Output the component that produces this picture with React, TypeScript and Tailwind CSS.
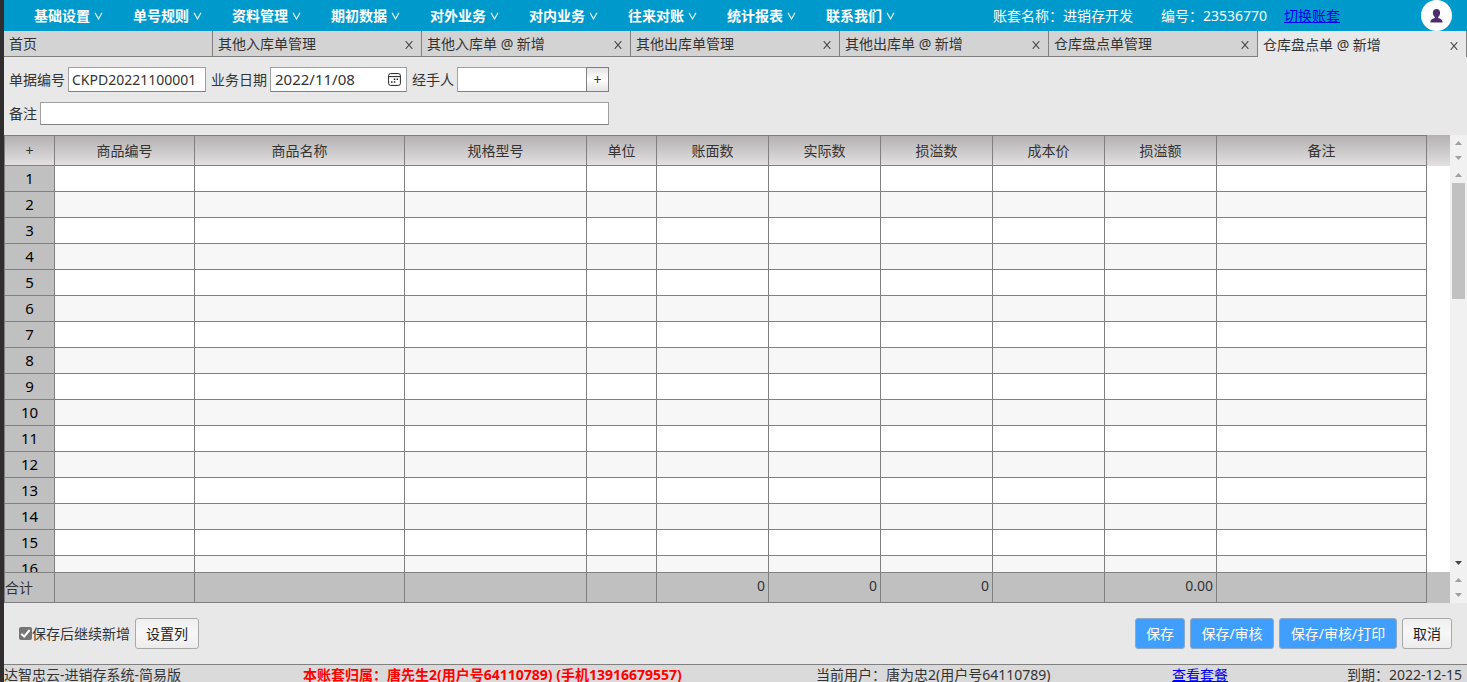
import React from "react";

const menus = ["基础设置", "单号规则", "资料管理", "期初数据", "对外业务", "对内业务", "往来对账", "统计报表", "联系我们"];

const tabs = [
  "首页",
  "其他入库单管理",
  "其他入库单 @ 新增",
  "其他出库单管理",
  "其他出库单 @ 新增",
  "仓库盘点单管理",
  "仓库盘点单 @ 新增",
];

const columns = [
  { title: "商品编号", col: "w-[140px]", total: "" },
  { title: "商品名称", col: "w-[210px]", total: "" },
  { title: "规格型号", col: "w-[182px]", total: "" },
  { title: "单位", col: "w-[70px]", total: "" },
  { title: "账面数", col: "w-[112px]", total: "0" },
  { title: "实际数", col: "w-[112px]", total: "0" },
  { title: "损溢数", col: "w-[112px]", total: "0" },
  { title: "成本价", col: "w-[112px]", total: "" },
  { title: "损溢额", col: "w-[112px]", total: "0.00" },
  { title: "备注", col: "w-[210px]", total: "" },
];

const rows = Array.from({ length: 16 }, (_, i) => i + 1);

const field = "border border-[#a0a0a0] border-b-[#808080] bg-white px-[3px] text-[#333] outline-none";
const plainButton =
  "h-[31px] rounded-[3px] border border-[#a9a9a9] bg-linear-to-b from-[#efefef] via-[#f7f7f7] to-[#ececec] px-[10px] text-[#222]";
const blueButton = "h-[31px] rounded-[3px] border border-[#8fa9c4] bg-[#409eff] px-[10px] text-white";

function Arrow({ down = false, dark = false }: { down?: boolean; dark?: boolean }) {
  return (
    <svg width="7" height="4" viewBox="0 0 7 4" aria-hidden="true">
      <path d={down ? "M0 0H7L3.5 4Z" : "M0 4H7L3.5 0Z"} fill={dark ? "#444" : "#a0a0a0"} />
    </svg>
  );
}

function MiniScroll() {
  return (
    <div className="flex h-[31px] flex-col items-center gap-[11px] pt-[6px]">
      <Arrow />
      <Arrow down />
    </div>
  );
}

function Header() {
  return (
    <header className="flex h-[31px] shrink-0 items-center bg-[#0099cc] pl-[30px] pr-[15px] text-white">
      <nav className="flex">
        {menus.map((m) => (
          <button key={m} type="button" className="flex w-[99px] items-center gap-1 font-bold whitespace-nowrap">
            {m}
            <svg width="9" height="8" viewBox="0 0 9 8" fill="none" stroke="#fff" strokeWidth="1.1" className="mt-px" aria-hidden="true">
              <path d="M1 0.8L4.5 7L8 0.8" />
            </svg>
          </button>
        ))}
      </nav>
      <div className="ml-auto flex items-center whitespace-nowrap">
        <span className="mr-7">账套名称：进销存开发</span>
        <span className="mr-[17px]">编号：23536770</span>
        <a href="#switch" className="mr-[81px] text-[#0000ee] underline">
          切换账套
        </a>
        <button type="button" aria-label="用户" className="flex size-[31px] items-center justify-center rounded-full bg-white">
          <svg width="13" height="14" viewBox="0 0 13 14" fill="#4b2e6b" className="mr-px" aria-hidden="true">
            <path d="M6.5 0C8.8 0 10.1 1.5 10.1 3.9C10.1 5.5 9.3 7.1 8.2 7.9V9C9.8 9.7 12.6 10.2 12.6 13.4H0.4C0.4 10.2 3.2 9.7 4.8 9V7.9C3.7 7.1 2.9 5.5 2.9 3.9C2.9 1.5 4.2 0 6.5 0Z" />
          </svg>
        </button>
      </div>
    </header>
  );
}

function TabBar() {
  return (
    <div role="tablist" className="flex h-[26px] shrink-0">
      {tabs.map((t, i) => {
        const active = i === tabs.length - 1;
        return (
          <div
            key={t}
            className={`flex min-w-0 flex-1 items-center justify-between border-r border-[#808080] pr-2 pl-[5px] ${
              active ? "bg-[#e8e8e8] pt-px" : "border-b bg-[#d3d3d3]"
            }`}
          >
            <button type="button" role="tab" aria-selected={active} className="truncate leading-5">
              {t}
            </button>
            {i > 0 && (
              <button type="button" aria-label="关闭" className="flex size-[9px] items-center justify-center">
                <svg width="8" height="8" viewBox="0 0 8 8" fill="none" stroke="#444" strokeWidth="1.1" className="mt-[2px]" aria-hidden="true">
                  <path d="M0.7 0.2L7.3 7.8M7.3 0.2L0.7 7.8" />
                </svg>
              </button>
            )}
          </div>
        );
      })}
    </div>
  );
}

function Form() {
  return (
    <form className="flex w-[605px] shrink-0 flex-col gap-[10px] pt-[10px] pb-[10px] pl-[5px]">
      <div className="flex items-center gap-[5px] whitespace-nowrap">
        <label className="flex items-center gap-[3px]">
          单据编号
          <input className={`${field} h-[25px] w-[138px]`} defaultValue="CKPD20221100001" />
        </label>
        <div className="flex items-center gap-[3px]">
          <label htmlFor="date">业务日期</label>
          <div className="flex h-[25px] w-[137px] items-center border border-[#a0a0a0] border-b-[#808080] bg-white pr-[5px] pl-1">
            <input id="date" className="w-0 flex-1 pb-px text-[15px] leading-5 outline-none" defaultValue="2022/11/08" />
            <button type="button" aria-label="选择日期">
              <svg width="13" height="13" viewBox="0 0 13 13" fill="none" stroke="#222" aria-hidden="true">
                <rect x="0.6" y="0.6" width="11.8" height="11.8" rx="2" />
                <path d="M0.6 3.6H12.4" />
                <g fill="#222" stroke="none">
                  <rect x="5.8" y="5.5" width="1.5" height="1.5" />
                  <rect x="8.6" y="5.5" width="1.5" height="1.5" />
                  <rect x="3" y="8.2" width="1.5" height="1.5" />
                  <rect x="5.8" y="8.2" width="1.5" height="1.5" />
                </g>
              </svg>
            </button>
          </div>
        </div>
        <div className="flex flex-1 items-center">
          <label htmlFor="handler" className="mr-[3px]">
            经手人
          </label>
          <input id="handler" className={`${field} h-[25px] w-0 flex-1 border-r-0`} />
          <button
            type="button"
            aria-label="选择经手人"
            className="flex h-[25px] w-[23px] items-center justify-center border border-[#808080] bg-linear-to-b from-[#e4e4e4] via-white to-[#e4e4e4]"
          >
            +
          </button>
        </div>
      </div>
      <label className="flex items-center gap-[3px] whitespace-nowrap">
        备注
        <input className={`${field} h-[23px] w-0 flex-1`} />
      </label>
    </form>
  );
}

function Grid() {
  const headCell =
    "border-t border-r border-b border-[#808080] bg-linear-to-b from-[#b3b1b2] to-[#e2e0e1] p-0 font-normal";
  return (
    <div className="flex min-h-0 flex-1">
      <div className="min-w-0 flex-1 overflow-hidden border-l border-[#808080] bg-white">
        <table className="w-full table-fixed border-separate border-spacing-0">
          <colgroup>
            <col className="w-[50px]" />
            {columns.map((c) => (
              <col key={c.title} className={c.col} />
            ))}
            <col />
          </colgroup>
          <thead className="sticky top-0">
            <tr className="h-[31px]">
              <th className={headCell}>
                <button type="button" aria-label="添加行">+</button>
              </th>
              {columns.map((c) => (
                <th key={c.title} className={headCell}>
                  {c.title}
                </th>
              ))}
              <td className="bg-linear-to-b from-[#b3b1b2] to-[#e2e0e1] p-0" />
            </tr>
          </thead>
          <tbody>
            {rows.map((n) => (
              <tr key={n} className="group h-[26px]">
                <th className="border-r border-b border-[#808080] bg-[#c0c0c0] px-0 pt-0 pb-[2px] text-[15px] leading-5 font-normal text-black">
                  {n}
                </th>
                {columns.map((c) => (
                  <td key={c.title} className="border-r border-b border-[#808080] p-0 group-even:bg-[#f7f7f7]" />
                ))}
                <td className="p-0" />
              </tr>
            ))}
          </tbody>
          <tfoot className="sticky bottom-0">
            <tr className="h-[31px]">
              <th className="border-t border-r border-b border-[#808080] bg-[#c0c0c0] p-0 text-left font-normal">合计</th>
              {columns.map((c) => (
                <td
                  key={c.title}
                  className="border-t border-r border-b border-[#808080] bg-[#c0c0c0] pt-0 pr-[3px] pb-1 pl-0 text-right"
                >
                  {c.total}
                </td>
              ))}
              <td className="bg-[#c0c0c0] p-0" />
            </tr>
          </tfoot>
        </table>
      </div>
      <div className="flex w-[17px] shrink-0 flex-col bg-[#f1f1f1]">
        <MiniScroll />
        <div className="flex flex-1 flex-col items-center pt-[7px] pb-[7px]">
          <Arrow />
          <div className="mt-[6px] mb-auto h-[116px] w-[13px] bg-[#c1c1c1]" />
          <Arrow down dark />
        </div>
        <MiniScroll />
      </div>
    </div>
  );
}

function Actions() {
  return (
    <div className="flex h-[61px] shrink-0 items-center justify-between px-[15px] whitespace-nowrap">
      <div className="flex items-center gap-[5px]">
        <label className="flex items-center">
          <input type="checkbox" defaultChecked className="peer sr-only" />
          <span className="flex size-[13px] items-center justify-center rounded-[2px] bg-[#757575]">
            <svg width="11" height="11" viewBox="0 0 11 11" fill="none" stroke="#fff" strokeWidth="2" aria-hidden="true">
              <path d="M1.3 5.8L4.2 8.6L9.6 2" />
            </svg>
          </span>
          保存后继续新增
        </label>
        <button type="button" className={plainButton}>设置列</button>
      </div>
      <div className="flex gap-[5px]">
        <button type="button" className={blueButton}>保存</button>
        <button type="button" className={`${blueButton} min-w-[84px]`}>保存/审核</button>
        <button type="button" className={`${blueButton} min-w-[118px]`}>保存/审核/打印</button>
        <button type="button" className={plainButton}>取消</button>
      </div>
    </div>
  );
}

function StatusBar() {
  return (
    <footer className="flex h-[18px] shrink-0 justify-between border-t border-[#808080] bg-[#dadada] leading-5 whitespace-nowrap">
      <span className="min-w-[180px]">达智忠云-进销存系统-简易版</span>
      <span className="min-w-[394px] font-bold text-[#f00]">本账套归属：唐先生2(用户号64110789) (手机13916679557)</span>
      <span className="min-w-[237px]">当前用户：唐为忠2(用户号64110789)</span>
      <a href="#plan" className="text-[#0000ee] underline">查看套餐</a>
      <span className="min-w-[120px]">到期：2022-12-15</span>
    </footer>
  );
}

export default function App() {
  return (
    <div className="flex h-screen overflow-hidden bg-[#e8e8e8] font-['Noto_Sans','Noto_Sans_CJK_SC',sans-serif] text-[14px] leading-5 text-[#333]">
      <div className="w-1 shrink-0 bg-[#2f2d2d]" />
      <div className="flex min-w-0 flex-1 flex-col">
        <Header />
        <TabBar />
        <Form />
        <Grid />
        <Actions />
        <StatusBar />
      </div>
    </div>
  );
}
